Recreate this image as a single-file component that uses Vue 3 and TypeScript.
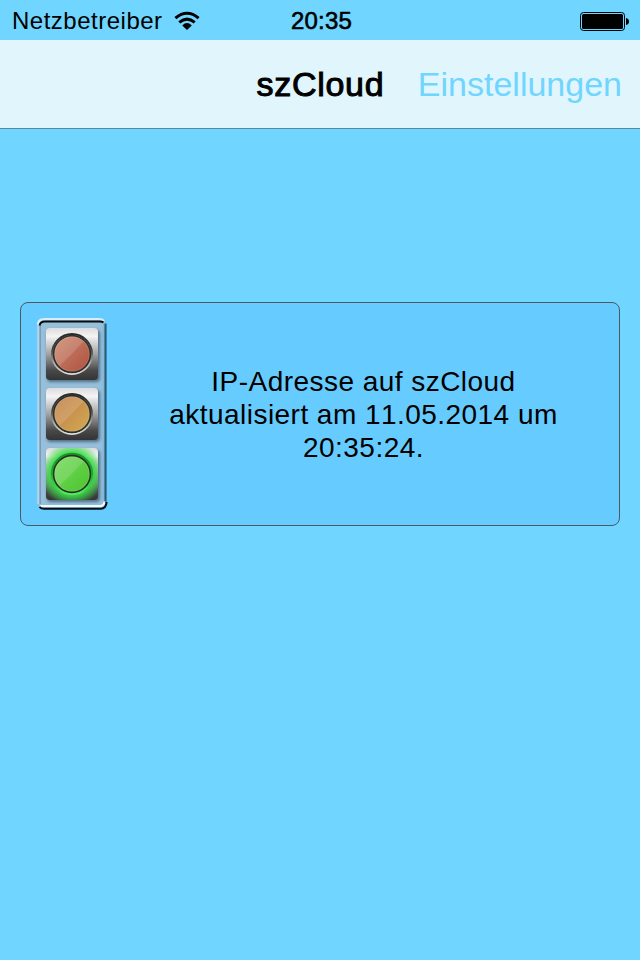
<script setup lang="ts">
interface Lamp {
  id: string
  y: number
  from: string
  to: string
  lit: boolean
}

const lamps: Lamp[] = [
  { id: 'red', y: 12, from: '#cc8a70', to: '#ad503f', lit: false },
  { id: 'amber', y: 72, from: '#be7a45', to: '#d3ac55', lit: false },
  { id: 'green', y: 132, from: '#74d95c', to: '#4bc52e', lit: true },
]
</script>

<template>
  <main class="screen">
    <header class="status">
      <div class="carrier">
        <span class="carrier-name">Netzbetreiber</span>
        <svg class="wifi" width="26" height="20" viewBox="0 0 26 20">
          <g fill="none" stroke="#000" stroke-width="3">
            <path d="M1.4 7.1 Q13 -2.6 24.6 7.1" />
            <path d="M5.3 11.4 Q13 4.8 20.7 11.4" />
          </g>
          <path d="M8.2 14.4 Q13 9.8 17.8 14.4 L13 19Z" />
        </svg>
      </div>
      <span class="clock">20:35</span>
      <svg class="battery" width="50" height="20" viewBox="0 0 50 20">
        <rect x=".5" y=".5" width="44" height="18" rx="3" fill="none" stroke="#000" />
        <rect x="2" y="2" width="41" height="15" rx="1.5" />
        <path d="M46 6 Q49 6.5 49 9.5 T46 13Z" />
      </svg>
    </header>

    <nav class="navbar">
      <h1 class="title">szCloud</h1>
      <a class="settings">Einstellungen</a>
    </nav>

    <section class="card">
      <svg class="signal" width="72" height="194" viewBox="0 0 72 194">
        <defs>
          <linearGradient id="metal" x1="0" y1="0" x2="0" y2="1">
            <stop offset="0" stop-color="#dddddf" />
            <stop offset=".16" stop-color="#f3f3f3" />
            <stop offset=".5" stop-color="#a2a2a3" />
            <stop offset=".82" stop-color="#484849" />
            <stop offset="1" stop-color="#343435" />
          </linearGradient>
          <linearGradient id="ring" x1="0" y1="0" x2="0" y2="1">
            <stop offset="0" stop-color="#292929" />
            <stop offset=".4" stop-color="#444" />
            <stop offset=".72" stop-color="#aaa" />
            <stop offset="1" stop-color="#ddd" />
          </linearGradient>
          <radialGradient id="glow" gradientUnits="userSpaceOnUse" cx="36" cy="26" r="32">
            <stop offset=".6" stop-color="#25c933" />
            <stop offset=".68" stop-color="#3ad947" stop-opacity=".9" />
            <stop offset=".85" stop-color="#3ae045" stop-opacity=".45" />
            <stop offset="1" stop-color="#3ae045" stop-opacity="0" />
          </radialGradient>
          <linearGradient id="lit-ring" x1="0" y1="0" x2="0" y2="1">
            <stop offset="0" stop-color="#14951e" />
            <stop offset=".5" stop-color="#20ac2b" />
            <stop offset="1" stop-color="#58e963" />
          </linearGradient>
          <linearGradient v-for="lamp in lamps" :id="lamp.id" :key="lamp.id" x1="0" y1="0" x2="1" y2="1">
            <stop offset="0" :stop-color="lamp.from" />
            <stop offset="1" :stop-color="lamp.to" />
          </linearGradient>
          <clipPath id="tile"><rect x="10" width="52" height="52" rx="4" /></clipPath>
          <filter id="soft" x="-20%" y="-20%" width="140%" height="140%">
            <feGaussianBlur stdDeviation="1.4" />
          </filter>
        </defs>

        <rect x="2" y="3" width="68" height="189" rx="5" fill="#98bfd9" />
        <path d="M2.2 188 V8" fill="none" stroke="#b1d6ed" stroke-width="2" />
        <path d="M4.2 188 V9" fill="none" stroke="#7195ad" stroke-width="1.2" />
        <path d="M67.3 7 V187" fill="none" stroke="#84b8db" stroke-width="1.5" />
        <path d="M69.5 7.5 V187" fill="none" stroke="#285d7a" stroke-width="2.2" />
        <path d="M2 9 Q2 3.2 8 3.2 H63 Q66.5 3.2 68 5" fill="none" stroke="#d6eefa" stroke-width="2.2" />
        <path d="M3.5 9.5 Q4.3 5.5 9 5.5 H64 Q66 5.5 67.5 6.4" fill="none" stroke="#070b0d" stroke-width="2" />
        <path d="M4 190 H64 Q68 190 68.5 185.5" fill="none" stroke="#eefaff" stroke-width="2.2" />
        <path d="M3.5 190.8 Q5 192.8 8 192.8 H65 Q70.2 192.4 70.6 186" fill="none" stroke="#071015" stroke-width="2" />

        <g v-for="lamp in lamps" :key="lamp.id" :transform="`translate(0 ${lamp.y})`">
          <rect x="11" y="2" width="53" height="52" rx="4" fill="#34566d" opacity=".75" filter="url(#soft)" />
          <rect x="10" width="52" height="52" rx="4" fill="url(#metal)" />
          <g v-if="lamp.lit">
            <rect x="10" width="52" height="52" fill="url(#glow)" clip-path="url(#tile)" />
            <circle cx="36" cy="26" r="20" fill="none" stroke="url(#lit-ring)" stroke-width="2.4" />
          </g>
          <circle v-else cx="36" cy="26" r="20" fill="none" stroke="url(#ring)" stroke-width="2" />
          <circle cx="36" cy="26" r="18.4" :fill="`url(#${lamp.id})`" stroke="#2b302b" stroke-width="1.6" />
          <circle cx="36" cy="26" r="17.1" fill="none" stroke="#fff" stroke-opacity=".1" />
          <path d="M23.2 37.8 A17.4 17.4 0 0 1 47.8 13.2 Q42 19 37.5 24 T23.2 37.8Z" fill="#fff" opacity=".14" />
        </g>
      </svg>
      <p class="message">
        IP-Adresse auf szCloud<br />aktualisiert am 11.05.2014 um<br />20:35:24.
      </p>
    </section>
  </main>
</template>

<style>
body {
  margin: 0;
  background: #70d5ff;
}
</style>

<style scoped>
.screen {
  box-sizing: border-box;
  width: 640px;
  height: 960px;
  overflow: hidden;
  background: #70d5ff;
  color: #000;
  font-family: "Liberation Sans", Arial, sans-serif;
  font-kerning: none;
}

.status {
  display: grid;
  grid-template-columns: 1fr 60px 1fr;
  align-items: center;
  box-sizing: border-box;
  height: 40px;
  padding: 0 10px 0 12px;
  font-size: 24px;
  line-height: 40px;
}

.carrier {
  display: flex;
  align-items: center;
  gap: 11px;
}

.carrier-name {
  letter-spacing: 0.5px;
}

.clock {
  padding-top: 1px;
  letter-spacing: 0.2px;
  white-space: nowrap;
  -webkit-text-stroke: 0.6px #000;
}

.battery {
  justify-self: end;
  margin-top: 2px;
}

.navbar {
  display: grid;
  grid-template-columns: 1fr 127px 1fr;
  box-sizing: border-box;
  height: 89px;
  padding: 0 18px;
  border-bottom: 1px solid #508aa5;
  background: #e1f5fd;
  font-size: 34px;
  line-height: 88px;
}

.title {
  grid-column: 2;
  margin: 0;
  font-size: 34px;
  font-weight: 400;
  letter-spacing: 0.7px;
  white-space: nowrap;
  -webkit-text-stroke: 1px #000;
}

.settings {
  justify-self: end;
  color: #70d5ff;
}

.card {
  display: flex;
  box-sizing: border-box;
  width: 600px;
  height: 224px;
  margin: 173px 20px 0;
  padding: 13px 0 0 15px;
  border: 1px solid #4d5960;
  border-radius: 8px;
  background: #66cbff;
}

.signal {
  flex: none;
}

.message {
  flex: 1;
  margin: 49px 0 0;
  font-size: 28px;
  line-height: 33px;
  letter-spacing: 0.46px;
  text-align: center;
}
</style>
